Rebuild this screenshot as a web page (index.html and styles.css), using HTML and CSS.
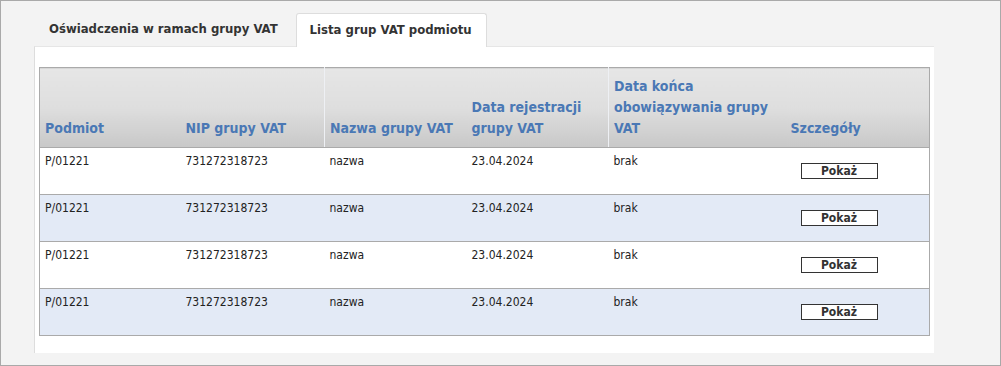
FILE: index.html
```html
<!doctype html>
<html lang="pl">
	<head>
		<meta charset="utf-8" />
		<title>Lista grup VAT podmiotu</title>
		<link rel="stylesheet" href="styles.css">
	</head>

	<body>
		<div id="page">
			<!-- Tabs -->
			<ul class="tabs">
				<li class="tab">Oświadczenia w ramach grupy VAT</li>
				<li class="tab active">Lista grup VAT podmiotu</li>
			</ul>

			<!-- Panel with table -->
			<div class="panel">
				<table class="grid">
					<colgroup>
						<col style="width: 141px" />
						<col style="width: 144px" />
						<col style="width: 142px" />
						<col style="width: 142px" />
						<col style="width: 177px" />
						<col />
					</colgroup>
					<thead>
						<tr>
							<th>Podmiot</th>
							<th>NIP grupy VAT</th>
							<th class="sep">Nazwa grupy VAT</th>
							<th>Data rejestracji grupy VAT</th>
							<th class="sep">Data końca obowiązywania grupy VAT</th>
							<th class="details">Szczegóły</th>
						</tr>
					</thead>
					<tbody>
						<tr>
							<td>P/01221</td>
							<td>731272318723</td>
							<td>nazwa</td>
							<td>23.04.2024</td>
							<td>brak</td>
							<td class="action"><button>Pokaż</button></td>
						</tr>
						<tr class="odd">
							<td>P/01221</td>
							<td>731272318723</td>
							<td>nazwa</td>
							<td>23.04.2024</td>
							<td>brak</td>
							<td class="action"><button>Pokaż</button></td>
						</tr>
						<tr>
							<td>P/01221</td>
							<td>731272318723</td>
							<td>nazwa</td>
							<td>23.04.2024</td>
							<td>brak</td>
							<td class="action"><button>Pokaż</button></td>
						</tr>
						<tr class="odd">
							<td>P/01221</td>
							<td>731272318723</td>
							<td>nazwa</td>
							<td>23.04.2024</td>
							<td>brak</td>
							<td class="action"><button>Pokaż</button></td>
						</tr>
					</tbody>
				</table>
			</div>
		</div>
	</body>
</html>
```

FILE: styles.css
```css
html,
body {
	margin: 0;
	height: 100%;
}

body {
	font-family: "DejaVu Sans Condensed", "DejaVu Sans", sans-serif;
	color: #222;
}

#page {
	box-sizing: border-box;
	height: 366px;
	border: 1px solid #a9a9a9;
	background-color: #f3f3f3;
	padding: 12px 0 0 33px;
}

/* Tabs */
.tabs {
	display: flex;
	list-style: none;
	margin: 0;
	padding: 0;
	height: 33px;
}

.tab {
	box-sizing: border-box;
	height: 34px;
	padding: 8px 18px 0 15px;
	font-size: 13px;
	font-weight: bold;
	color: #333;
	white-space: nowrap;
}

.tab.active {
	background: #fff;
	border: 1px solid #ddd;
	border-bottom: none;
	border-radius: 3px 3px 0 0;
	padding: 8px 14px 0 13px;
	position: relative;
	z-index: 1;
}

/* Panel */
.panel {
	width: 900px;
	height: 307px;
	box-sizing: border-box;
	background: #fff;
	border-left: 1px solid #ddd;
	border-top: 1px solid #e6e6e6;
	padding: 20px 0 0 4px;
}

table.grid {
	border-collapse: collapse;
	width: 891px;
	table-layout: fixed;
	border: 1px solid #aaa;
}

.grid th {
	height: 71px;
	padding: 0 5px 8px 5px;
	vertical-align: bottom;
	text-align: left;
	font-size: 14px;
	line-height: 21px;
	color: #4a78b5;
	background: linear-gradient(#e6e6e6, #dedede 50%, #c8c8c8);
	border-bottom: 1px solid #aaa;
}

.grid th.sep {
	border-left: 1px solid #eef0f4;
}

.grid td {
	height: 47px;
	box-sizing: border-box;
	padding: 6px 5px 0 5px;
	vertical-align: top;
	font-size: 12px;
	color: #222;
	border-bottom: 1px solid #aaa;
}

.grid tr.odd td {
	background-color: #e3eaf6;
}

.grid td.action {
	vertical-align: middle;
	padding: 0 0 0 15px;
}

.grid button {
	width: 77px;
	height: 16px;
	padding: 0;
	border: 1px solid #333;
	border-radius: 0;
	background: #fff;
	font-family: "DejaVu Sans Condensed", "DejaVu Sans", sans-serif;
	font-size: 12px;
	font-weight: bold;
	line-height: 14px;
	color: #333;
	cursor: pointer;
}
```
